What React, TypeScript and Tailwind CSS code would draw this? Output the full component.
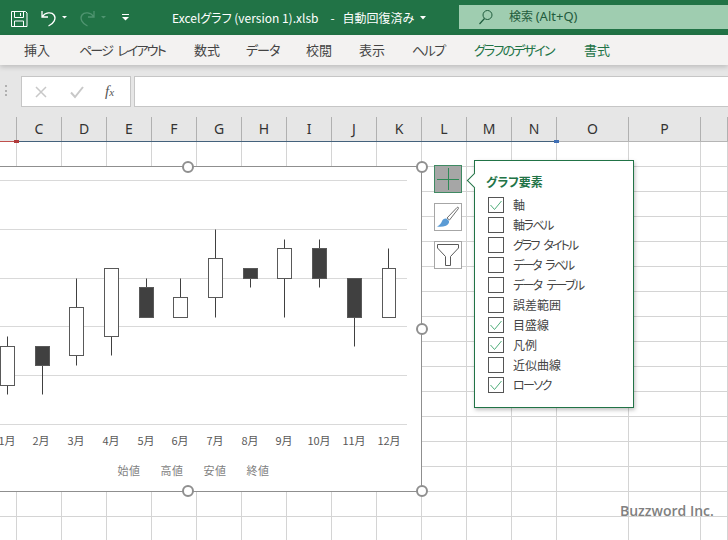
const JP = "font-['Noto_Sans_CJK_JP',sans-serif]"
const PALT = "[font-feature-settings:'palt']"

const TABS = [
  { label: '挿入', w: 'w-[55px]', on: false, track: '' },
  { label: 'ページ レイアウト', w: 'w-[115px]', on: false, track: 'tracking-[-1.800px] [word-spacing:4px]' },
  { label: '数式', w: 'w-[52px]', on: false, track: '' },
  { label: 'データ', w: 'w-[60px]', on: false, track: 'tracking-[-1px]' },
  { label: '校閲', w: 'w-[53px]', on: false, track: '' },
  { label: '表示', w: 'w-[53px]', on: false, track: '' },
  { label: 'ヘルプ', w: 'w-[62px]', on: false, track: 'tracking-[-1.500px]' },
  { label: 'グラフのデザイン', w: 'w-[110px]', on: true, track: 'tracking-[-1.800px]' },
  { label: '書式', w: 'w-[40px]', on: true, track: '' },
]

const COLS = ['', 'C', 'D', 'E', 'F', 'G', 'H', 'I', 'J', 'K', 'L', 'M', 'N', 'O', 'P', '']

const ELEMENTS = [
  { label: '軸', on: true, track: '' },
  { label: '軸ラベル', on: false, track: 'tracking-[-1.500px]' },
  { label: 'グラフ タイトル', on: false, track: 'tracking-[-1.900px] [word-spacing:4px]' },
  { label: 'データ ラベル', on: false, track: 'tracking-[-2px] [word-spacing:4px]' },
  { label: 'データ テーブル', on: false, track: 'tracking-[-1.700px] [word-spacing:4px]' },
  { label: '誤差範囲', on: false, track: '' },
  { label: '目盛線', on: true, track: '' },
  { label: '凡例', on: true, track: '' },
  { label: '近似曲線', on: false, track: '' },
  { label: 'ローソク', on: true, track: 'tracking-[-1.600px]' },
]

// page coordinates read off the screenshot
const CANDLES = [
  { m: '1月', tx: 7, cx: 7.5, l: 0.5, r: 14.5, top: 346.5, bot: 385.5, hi: 336.5, lo: 394.5, dark: false },
  { m: '2月', tx: 41, cx: 42.5, l: 35.5, r: 49.5, top: 346.5, bot: 365.5, hi: 346.5, lo: 394.5, dark: true },
  { m: '3月', tx: 76, cx: 76.5, l: 69.5, r: 83.5, top: 307.5, bot: 355.5, hi: 278.5, lo: 365.5, dark: false },
  { m: '4月', tx: 111, cx: 111.5, l: 104.5, r: 118.5, top: 268.5, bot: 336.5, hi: 268.5, lo: 355.5, dark: false },
  { m: '5月', tx: 146, cx: 146.5, l: 139.5, r: 153.5, top: 287.5, bot: 317.5, hi: 278.5, lo: 317.5, dark: true },
  { m: '6月', tx: 180, cx: 180.5, l: 173.5, r: 187.5, top: 297.5, bot: 317.5, hi: 278.5, lo: 317.5, dark: false },
  { m: '7月', tx: 215, cx: 215.5, l: 208.5, r: 222.5, top: 258.5, bot: 297.5, hi: 229.5, lo: 317.5, dark: false },
  { m: '8月', tx: 250, cx: 250.5, l: 243.5, r: 257.5, top: 268.5, bot: 278.5, hi: 268.5, lo: 287.5, dark: true },
  { m: '9月', tx: 284, cx: 284.5, l: 277.5, r: 291.5, top: 248.5, bot: 278.5, hi: 239.5, lo: 317.5, dark: false },
  { m: '10月', tx: 319, cx: 319.5, l: 312.5, r: 326.5, top: 248.5, bot: 278.5, hi: 239.5, lo: 287.5, dark: true },
  { m: '11月', tx: 354, cx: 354.5, l: 347.5, r: 361.5, top: 278.5, bot: 317.5, hi: 278.5, lo: 346.5, dark: true },
  { m: '12月', tx: 389, cx: 388.5, l: 382.5, r: 395.5, top: 268.5, bot: 317.5, hi: 248.5, lo: 317.5, dark: false },
]

const GRIDLINES = [180.5, 229.5, 278.5, 326.5, 375.5, 424.5]
const LEGEND = [
  { t: '始値', x: 129 },
  { t: '高値', x: 172 },
  { t: '安値', x: 215 },
  { t: '終値', x: 258 },
]

function TitleIcons() {
  return (
    <svg width="140" height="35" viewBox="0 0 140 35" fill="none" className="shrink-0">
      {/* save */}
      <path d="M11.500 11.500h14l1.500 1.500v13.500h-15.500z M14.500 11.500v6h9v-6 M14.500 26.500v-5.500h9v5.500 M20.500 13v3" stroke="#fff" strokeWidth="1" />
      {/* undo */}
      <path d="M42 11v6h6 M42.500 16.500c2.500-4 9-5 11.500-1.500 2.500 3.500 0 8.500-5.500 11" stroke="#fff" strokeWidth="1.300" />
      <path d="M62 16h5l-2.500 2.500z" fill="#fff" />
      {/* redo */}
      <path d="M94 11v6h-6 M93.500 16.500c-2.500-4-9-5-11.500-1.500-2.500 3.500 0 8.500 5.500 11" stroke="#4f9470" strokeWidth="1.300" />
      <path d="M101 16h5l-2.500 2.500z" fill="#4f9470" />
      {/* customise */}
      <path d="M122 14.500h7" stroke="#fff" strokeWidth="1" />
      <path d="M122 17h7l-3.500 3.500z" fill="#fff" />
    </svg>
  )
}

function Handle({ className }: { className: string }) {
  return <div className={`absolute w-[12px] h-[12px] rounded-full border-2 border-[#8f8f8f] bg-white ${className}`} />
}

function Chart() {
  return (
    <div className="absolute left-[-10px] top-[166px] w-[432px] h-[326px] bg-white border border-[#8f8f8f]">
      <svg width="430" height="324" viewBox="-9 167 430 324" className={JP}>
        {GRIDLINES.map(y => (
          <line key={y} x1="-9" x2="407" y1={y} y2={y} stroke="#d9d9d9" />
        ))}
        {CANDLES.map(c => (
          <g key={c.m}>
            <line x1={c.cx} x2={c.cx} y1={c.hi} y2={c.lo} stroke="#404040" />
            <rect x={c.l} y={c.top} width={c.r - c.l} height={c.bot - c.top} fill={c.dark ? '#404040' : '#fff'} stroke="#595959" />
            <text x={c.tx} y={445} textAnchor="middle" fontSize="11" fill="#595959">{c.m}</text>
          </g>
        ))}
        {LEGEND.map(l => (
          <text key={l.t} x={l.x} y={475} textAnchor="middle" fontSize="11" letterSpacing="0.5" fill="#7f7f7f">{l.t}</text>
        ))}
      </svg>
    </div>
  )
}

function ChartButtons() {
  return (
    <div className="absolute left-[434px] top-[165px] flex flex-col gap-[10px]">
      <div className="w-[28px] h-[28px] bg-[#a6a6a6] border border-[#3f8a63] flex items-center justify-center">
        <svg width="22" height="22" viewBox="0 0 22 22">
          <path d="M11.500 0v22M0 11.500h22" stroke="#2f8a57" strokeWidth="1" />
        </svg>
      </div>
      <div className="w-[28px] h-[28px] bg-white border border-[#a6a6a6] flex items-center justify-center">
        <svg width="26" height="26" viewBox="0 0 26 26" fill="none">
          <path d="M12 14L22 3.500c1-.8 2 .2 1.300 1.200L14.500 16z" fill="#fff" stroke="#6f6f6f" />
          <path d="M2 22.500c3 .5 6 .5 9-.8 3-1.400 3.700-3.800 2.700-5.200l-2-1.800c-2.200-.5-4 .8-5 3-.7 1.800-2 3.600-4.700 4.800z" fill="#5a9bd5" />
        </svg>
      </div>
      <div className="w-[28px] h-[28px] bg-white border border-[#a6a6a6] flex items-center justify-center">
        <svg width="24" height="24" viewBox="0 0 24 24" fill="none">
          <path d="M1.500 1.500h21v3.500l-8 8.500v9h-5v-9l-8-8.500z" stroke="#595959" />
        </svg>
      </div>
    </div>
  )
}

function ElementsPopup() {
  return (
    <div className={`absolute left-[474px] top-[160px] w-[160px] h-[248px] bg-white border border-[#217346] shadow-[1px_2px_4px_rgba(0,0,0,0.25)] pl-[13px] pt-[12px] ${JP} ${PALT}`}>
      <div className="absolute left-[-6px] top-[14px] w-[11px] h-[11px] rotate-45 bg-white border-l border-b border-[#217346]" />
      <div className="text-[12px] leading-[18px] font-bold text-[#217346] ml-[-2px]">グラフ要素</div>
      <div className="flex flex-col mt-[4px]">
        {ELEMENTS.map(e => (
          <div key={e.label} className="flex items-center h-[20px] gap-[9px]">
            <div className="w-[16px] h-[16px] border border-[#555] bg-white flex items-center justify-center">
              {e.on && (
                <svg width="14" height="14" viewBox="0 0 14 14" fill="none">
                  <path d="M1.500 7l4 4.500 7-8.500" stroke="#4fae7a" strokeWidth="1" />
                </svg>
              )}
            </div>
            <span className={`text-[12px] text-[#444] ${e.track}`}>{e.label}</span>
          </div>
        ))}
      </div>
    </div>
  )
}

export default function App() {
  return (
    <div className={`relative w-[728px] h-[540px] overflow-hidden bg-white flex flex-col ${JP}`}>
      {/* title bar */}
      <div className="h-[35px] bg-[#217346] flex items-center shrink-0">
        <TitleIcons />
        <div className={`ml-[32px] text-[12px] text-white whitespace-nowrap flex items-center w-[287px] ${PALT}`}>
          <span>Excelグラフ (version 1).xlsb</span>
          <span className="ml-[12px]">-</span>
          <span className="ml-[8px]">自動回復済み</span>
          <svg width="6" height="4" viewBox="0 0 6 4" className="ml-[6px]"><path d="M0 0h6L3 3.500z" fill="#fff" /></svg>
        </div>
        <div className="flex-1 h-[24px] bg-[#9fcdb0] flex items-center pl-[19px] mb-[1px]">
          <svg width="16" height="16" viewBox="0 0 16 16" fill="none">
            <circle cx="9.500" cy="6" r="4.500" stroke="#1f5c3d" />
            <path d="M6.500 9.500L1.500 15" stroke="#1f5c3d" strokeWidth="1.200" />
          </svg>
          <span className="ml-[15px] text-[12px] text-[#1f5c3d]">
            検索 <span className="text-[13px] font-['Noto_Sans',sans-serif]">(Alt+Q)</span>
          </span>
        </div>
      </div>

      {/* ribbon tabs */}
      <div className={`relative z-10 h-[30px] bg-[#f3f2f1] shadow-[0_2px_5px_rgba(0,0,0,0.18)] flex items-center pl-[24px] shrink-0 ${PALT}`}>
        {TABS.map(t => (
          <div key={t.label} className={`${t.w} ${t.track} shrink-0 text-[13px] whitespace-nowrap ${t.on ? 'text-[#217346]' : 'text-[#444]'}`}>
            {t.label}
          </div>
        ))}
      </div>

      {/* formula bar */}
      <div className="h-[52px] bg-[#e6e6e6] flex items-start pt-[11px] pl-[5px] shrink-0">
        <div className="w-[2px] h-[11px] mt-[9px] border-l-2 border-dotted border-[#b0b0b0]" />
        <div className="ml-[14px] w-[110px] h-[31px] bg-white border border-[#c6c6c6] flex items-center">
          <svg width="14" height="14" viewBox="0 0 14 14" className="ml-[12px]" fill="none">
            <path d="M2 2l10 10M12 2L2 12" stroke="#c8c8c8" strokeWidth="1.500" />
          </svg>
          <svg width="14" height="14" viewBox="0 0 14 14" className="ml-[22px]" fill="none">
            <path d="M1 7.500l4 4.500 8-10" stroke="#c8c8c8" strokeWidth="2" />
          </svg>
          <span className="ml-[21px] text-[15px] italic text-[#555] font-['Liberation_Serif',serif]">
            f<span className="text-[11px]">x</span>
          </span>
        </div>
        <div className="ml-[3px] flex-1 h-[31px] bg-white border border-[#c6c6c6] border-r-0" />
      </div>

      {/* column headers */}
      <div className="relative h-[25px] bg-[#e6e6e6] border-b border-[#b5b5b5] grid grid-cols-[17px_repeat(12,45px)_72px_72px_27px] shrink-0">
        {COLS.map((c, i) => (
          <div key={i} className="border-r border-[#b0b0b0] flex items-center justify-center pb-[2px] text-[14px] text-[#333] font-['Noto_Sans',sans-serif]">
            {c}
          </div>
        ))}
        <div className="absolute left-[16px] w-[540px] bottom-[-1px] h-[1px] bg-[#44627c]" />
        <div className="absolute left-0 w-[16px] bottom-[-1px] h-[1px] bg-[#c0504d]" />
        <div className="absolute left-[14px] w-[5px] h-[3px] bottom-[-2px] bg-[#b03a3a]" />
        <div className="absolute left-[554px] w-[5px] h-[3px] bottom-[-2px] bg-[#3f6fb5]" />
      </div>

      {/* sheet */}
      <div className="flex-1 grid grid-cols-[17px_repeat(12,45px)_72px_72px_27px] auto-rows-[25px] overflow-hidden">
        {Array.from({ length: 16 * 16 }).map((_, i) => (
          <div key={i} className="border-r border-b border-[#d4d4d4]" />
        ))}
      </div>

      <Chart />
      <Handle className="left-[182px] top-[161px]" />
      <Handle className="left-[416px] top-[161px]" />
      <Handle className="left-[416px] top-[323px]" />
      <Handle className="left-[182px] top-[485px]" />
      <Handle className="left-[416px] top-[485px]" />
      <ChartButtons />
      <ElementsPopup />

      <div className="absolute left-[620px] top-[500px] text-[14px] font-semibold text-[#808080] font-['Open_Sans',sans-serif]">
        Buzzword Inc.
      </div>
    </div>
  )
}
